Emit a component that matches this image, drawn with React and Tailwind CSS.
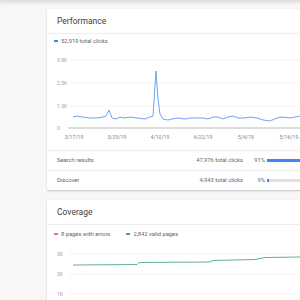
const perfPoints = [
  [73, 118], [77, 117], [82, 118], [90, 119], [97, 119], [103, 118], [106, 117], [109, 111],
  [112, 119], [116, 120], [120, 118], [124, 119], [130, 118], [137, 119], [145, 120], [150, 118],
  [153, 117], [156, 72], [158, 100], [160, 115], [163, 120], [168, 121], [172, 120], [178, 119],
  [185, 120], [190, 119], [197, 119], [203, 119], [208, 120], [213, 118], [218, 118], [223, 120],
  [228, 118], [233, 117], [238, 119], [245, 119], [250, 118], [257, 119], [263, 121], [270, 122],
  [277, 119], [282, 118], [290, 119], [295, 118], [300, 117],
]

const coveragePoints = [
  [73, 264], [137, 263.5], [139, 261.5], [210, 261], [213, 259.5], [255, 258.5], [265, 256.5], [300, 256],
]

// chart svgs are placed in card space: x - 47, y - top
const toPath = (pts, top) => pts.map(([x, y], i) => `${i ? 'L' : 'M'}${x - 47} ${y - top}`).join(' ')

const font = { fontFamily: 'Roboto, "Liberation Sans", sans-serif' }

function PerfChart() {
  const yTicks = [['3.8K', 12], ['2.5K', 35], ['1.3K', 58]]
  const xTicks = [['3/17/19', 27], ['3/29/19', 70], ['4/10/19', 113], ['4/22/19', 156], ['5/4/19', 199], ['5/16/19', 242]]
  return (
    <svg width="253" height="102" className="block" style={font}>
      {yTicks.map(([l, y]) => (
        <g key={l}>
          <line x1="21" x2="253" y1={y} y2={y} stroke="#eeeeee" strokeWidth="0.7" />
          <text x="10" y={y + 1.8} fontSize="5" fill="#9aa0a6">{l}</text>
        </g>
      ))}
      <line x1="21" x2="253" y1="80" y2="80" stroke="#9e9e9e" strokeWidth="0.7" />
      <text x="10" y="81.8" fontSize="5" fill="#9aa0a6">0</text>
      {xTicks.map(([l, x]) => (
        <text key={l} x={x} y="91" fontSize="5.2" fill="#80868b" textAnchor="middle">{l}</text>
      ))}
      <path d={toPath(perfPoints, 49)} fill="none" stroke="#6fa3f7" strokeWidth="1" strokeLinejoin="round" />
    </svg>
  )
}

function CoverageChart() {
  const yTicks = [['3K', 11], ['2K', 31], ['1K', 51]]
  return (
    <svg width="253" height="60" className="block" style={font}>
      {yTicks.map(([l, y]) => (
        <g key={l}>
          <line x1="21" x2="253" y1={y} y2={y} stroke="#eeeeee" strokeWidth="0.7" />
          <text x="10" y={y + 1.8} fontSize="5" fill="#9aa0a6">{l}</text>
        </g>
      ))}
      <path d={toPath(coveragePoints, 242)} fill="none" stroke="#5fb48a" strokeWidth="1" />
    </svg>
  )
}

function Row({ label, clicks, pct, fill }) {
  return (
    <div className="flex items-center h-[20px] border-t border-[#eeeeee] pl-[10px] text-[5.8px] text-[#5f6368]">
      <span>{label}</span>
      <span className="ml-auto">{clicks} total clicks</span>
      <span className="w-[22px] text-right">{pct}</span>
      <div className="ml-[2px] w-[40px] h-[3px] bg-[#e0e0e0] flex">
        <div className="h-full bg-[#4285f4]" style={{ width: fill }} />
      </div>
    </div>
  )
}

export default function App() {
  return (
    <div className="w-[300px] h-[300px] bg-[#f7f7f7] overflow-hidden" style={font}>
      <div className="h-[2px] bg-[#e2e2e2] shadow-[0_1px_3px_rgba(0,0,0,0.12)]" />
      <div className="pl-[47px] pt-[7px] flex flex-col gap-[10px]">
        <div className="w-[260px] bg-white shadow-[0_1px_2px_rgba(0,0,0,0.22)] rounded-[1px]">
          <div className="h-[25px] flex items-center pl-[10px] border-b border-[#eeeeee] text-[8.5px] text-[#3c4043]">
            Performance
          </div>
          <div className="h-[14px] flex items-center pl-[7px] gap-[3px] text-[5.8px] text-[#5f6368]">
            <span className="block w-[4px] h-[2px] shrink-0 bg-[#4285f4]" />
            <span>52,919 total clicks</span>
          </div>
          <PerfChart />
          <Row label="Search results" clicks="47,976" pct="91%" fill="91%" />
          <Row label="Discover" clicks="4,943" pct="9%" fill="2px" />
        </div>
        <div className="w-[260px] h-[120px] bg-white shadow-[0_1px_2px_rgba(0,0,0,0.22)] rounded-[1px]">
          <div className="h-[25px] flex items-center pl-[10px] border-b border-[#eeeeee] text-[8.5px] text-[#3c4043]">
            Coverage
          </div>
          <div className="h-[18px] flex items-center pl-[7px] text-[5.8px] text-[#5f6368]">
            <span className="block w-[4px] h-[2px] shrink-0 bg-[#e57368]" />
            <span className="ml-[3px]">8 pages with errors</span>
            <span className="block ml-[16px] w-[4px] h-[2px] shrink-0 bg-[#3fa873]" />
            <span className="ml-[3px]">2,842 valid pages</span>
          </div>
          <CoverageChart />
        </div>
      </div>
    </div>
  )
}
